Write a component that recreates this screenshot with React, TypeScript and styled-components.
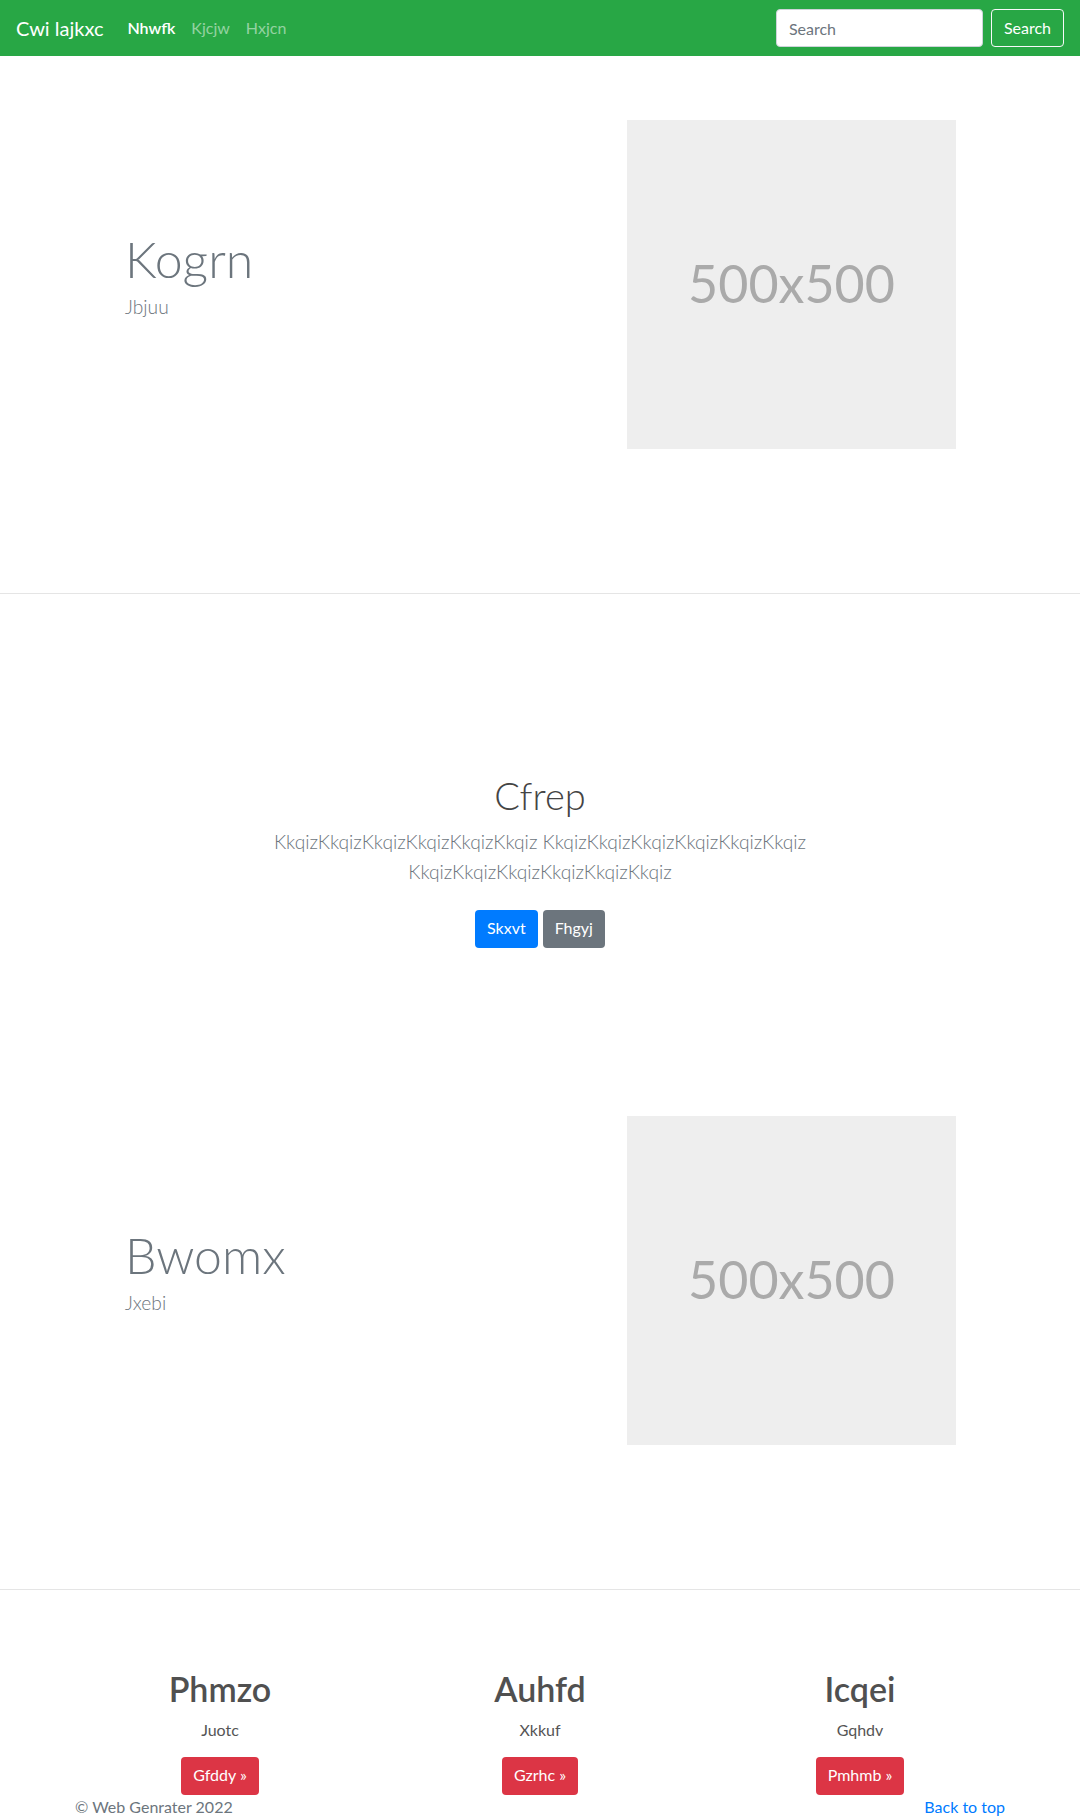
import React from "react";
import styled, { createGlobalStyle } from "styled-components";

const GlobalStyle = createGlobalStyle`
  html, body { margin: 0; padding: 0; background: #fff; }
  body {
    font-family: Lato, "Noto Sans", sans-serif;
    font-size: 16px;
    line-height: 1.5;
    color: #212529;
  }
  * { box-sizing: border-box; }
`;

const NavBar = styled.nav`
  height: 56px;
  background: #28a745;
  display: flex;
  align-items: center;
  padding: 0 16px;
`;

const Brand = styled.a`
  color: #fff;
  font-size: 20px;
  line-height: 30px;
  margin-right: 16px;
  text-decoration: none;
`;

const NavLinks = styled.div`
  display: flex;
  align-items: center;
`;

const NavLink = styled.a<{ $active?: boolean }>`
  padding: 8px;
  font-size: 16px;
  text-decoration: none;
  color: ${(p) => (p.$active ? "#fff" : "rgba(255,255,255,0.5)")};
  font-weight: ${(p) => (p.$active ? 600 : 400)};
`;

const SearchForm = styled.form`
  margin-left: auto;
  display: flex;
  align-items: center;
  gap: 8px;
`;

const SearchInput = styled.input`
  width: 207px;
  height: 38px;
  padding: 6px 12px;
  border: 1px solid #ced4da;
  border-radius: 4px;
  font-family: inherit;
  font-size: 16px;
  color: #495057;
  &::placeholder { color: #6c757d; }
`;

const OutlineButton = styled.button`
  height: 38px;
  padding: 6px 12px;
  border: 1px solid #f8f9fa;
  border-radius: 4px;
  background: transparent;
  color: #fff;
  font-family: inherit;
  font-size: 16px;
  line-height: 24px;
`;

const Hero = styled.section`
  display: grid;
  grid-template-columns: 1fr 329px;
  align-items: center;
  padding: 64px 124px 144px 125px;
  border-bottom: 1px solid #e5e5e5;
`;

const HeroText = styled.div`
  padding-bottom: 16px;
`;

const HeroTitle = styled.h1`
  margin: 0 0 5px;
  font-size: 50px;
  font-weight: 300;
  line-height: 56px;
  color: #6c757d;
`;

const Lead = styled.p`
  margin: 0;
  font-size: 19.2px;
  font-weight: 300;
  line-height: 30px;
  color: #6c757d;
`;

const Placeholder = styled.div`
  width: 329px;
  height: 329px;
  background: #eee;
  color: #aaa;
  display: flex;
  align-items: center;
  justify-content: center;
  font-size: 52px;
  padding-bottom: 4px;
`;

const Jumbo = styled.section`
  padding: 177px 16px 104px;
  text-align: center;
`;

const JumboInner = styled.div`
  max-width: 610px;
  margin: 0 auto;
`;

const JumboTitle = styled.h1`
  margin: 0 0 8px;
  font-size: 38px;
  font-weight: 300;
  line-height: 48px;
  color: #444;
`;

const JumboButtons = styled.div`
  margin-top: 23px;
  display: flex;
  justify-content: center;
  gap: 5px;
`;

const Btn = styled.a<{ $variant: "primary" | "secondary" | "danger" }>`
  display: inline-block;
  height: 38px;
  padding: 6px 12px;
  border-radius: 4px;
  font-size: 16px;
  line-height: 24px;
  color: #fff;
  text-decoration: none;
  background: ${(p) =>
    p.$variant === "primary" ? "#007bff" : p.$variant === "secondary" ? "#6c757d" : "#dc3545"};
`;

const Features = styled.section`
  max-width: 960px;
  margin: 0 auto;
  padding-top: 80px;
  display: grid;
  grid-template-columns: repeat(3, 1fr);
`;

const Feature = styled.div`
  text-align: center;
  padding: 0 15px;
`;

const FeatureTitle = styled.h2`
  margin: 0 0 10px;
  font-size: 34px;
  font-weight: 600;
  line-height: 38px;
  color: #505050;
`;

const FeatureText = styled.p`
  margin: 0 0 15px;
  font-size: 16px;
  line-height: 24px;
  color: #555;
`;

const Footer = styled.footer`
  max-width: 960px;
  margin: 0 auto;
  padding: 0 15px;
  display: flex;
  justify-content: space-between;
  color: #6c757d;
  font-size: 16px;
  line-height: 24px;
`;

const FooterLink = styled.a`
  color: #007bff;
  text-decoration: none;
`;

const heroes = [
  { title: "Kogrn", sub: "Jbjuu" },
  { title: "Bwomx", sub: "Jxebi" },
];

const features = [
  { title: "Phmzo", text: "Juotc", btn: "Gfddy" },
  { title: "Auhfd", text: "Xkkuf", btn: "Gzrhc" },
  { title: "Icqei", text: "Gqhdv", btn: "Pmhmb" },
];

function HeroBlock({ title, sub }: { title: string; sub: string }) {
  return (
    <Hero>
      <HeroText>
        <HeroTitle>{title}</HeroTitle>
        <Lead>{sub}</Lead>
      </HeroText>
      <Placeholder>500x500</Placeholder>
    </Hero>
  );
}

export default function App() {
  return (
    <>
      <GlobalStyle />
      <NavBar>
        <Brand href="#">Cwi lajkxc</Brand>
        <NavLinks>
          <NavLink href="#" $active>Nhwfk</NavLink>
          <NavLink href="#">Kjcjw</NavLink>
          <NavLink href="#">Hxjcn</NavLink>
        </NavLinks>
        <SearchForm onSubmit={(e) => e.preventDefault()}>
          <SearchInput placeholder="Search" />
          <OutlineButton type="submit">Search</OutlineButton>
        </SearchForm>
      </NavBar>

      <HeroBlock {...heroes[0]} />

      <Jumbo>
        <JumboInner>
          <JumboTitle>Cfrep</JumboTitle>
          <Lead>
            KkqizKkqizKkqizKkqizKkqizKkqiz KkqizKkqizKkqizKkqizKkqizKkqiz KkqizKkqizKkqizKkqizKkqizKkqiz
          </Lead>
          <JumboButtons>
            <Btn href="#" $variant="primary">Skxvt</Btn>
            <Btn href="#" $variant="secondary">Fhgyj</Btn>
          </JumboButtons>
        </JumboInner>
      </Jumbo>

      <HeroBlock {...heroes[1]} />

      <Features>
        {features.map((f) => (
          <Feature key={f.title}>
            <FeatureTitle>{f.title}</FeatureTitle>
            <FeatureText>{f.text}</FeatureText>
            <Btn href="#" $variant="danger">{f.btn} »</Btn>
          </Feature>
        ))}
      </Features>

      <Footer>
        <span>© Web Genrater 2022</span>
        <FooterLink href="#">Back to top</FooterLink>
      </Footer>
    </>
  );
}
